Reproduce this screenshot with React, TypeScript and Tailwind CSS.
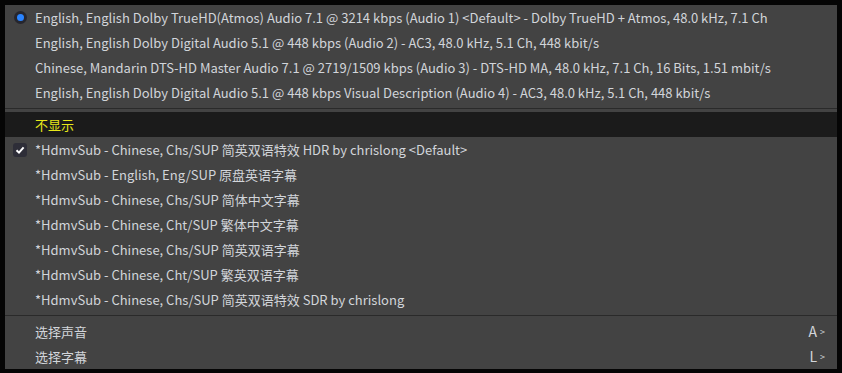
const audio = [
  'English, English Dolby TrueHD(Atmos) Audio 7.1 @ 3214 kbps (Audio 1) <Default> - Dolby TrueHD + Atmos, 48.0 kHz, 7.1 Ch',
  'English, English Dolby Digital Audio 5.1 @ 448 kbps (Audio 2) - AC3, 48.0 kHz, 5.1 Ch, 448 kbit/s',
  'Chinese, Mandarin DTS-HD Master Audio 7.1 @ 2719/1509 kbps (Audio 3) - DTS-HD MA, 48.0 kHz, 7.1 Ch, 16 Bits, 1.51 mbit/s',
  'English, English Dolby Digital Audio 5.1 @ 448 kbps Visual Description (Audio 4) - AC3, 48.0 kHz, 5.1 Ch, 448 kbit/s',
]

const subs = [
  '*HdmvSub - Chinese, Chs/SUP 简英双语特效 HDR by chrislong <Default>',
  '*HdmvSub - English, Eng/SUP 原盘英语字幕',
  '*HdmvSub - Chinese, Chs/SUP 简体中文字幕',
  '*HdmvSub - Chinese, Cht/SUP 繁体中文字幕',
  '*HdmvSub - Chinese, Chs/SUP 简英双语字幕',
  '*HdmvSub - Chinese, Cht/SUP 繁英双语字幕',
  '*HdmvSub - Chinese, Chs/SUP 简英双语特效 SDR by chrislong',
]

const Row = ({ children, mark, right }: { children: React.ReactNode; mark?: React.ReactNode; right?: string }) => (
  <div className="h-[25px] flex items-center">
    <div className="w-[30px] flex items-center justify-center">{mark}</div>
    <span className="flex-1 whitespace-nowrap">{children}</span>
    {right && (
      <span className="pr-[12px] flex items-center gap-[3px] text-[14px]">
        {right}
        <span className="text-[9px]">&gt;</span>
      </span>
    )}
  </div>
)

const Sep = () => (
  <div className="h-[7px] flex items-center">
    <div className="h-px w-full bg-[#2a2a2a]" />
  </div>
)

export default function App() {
  return (
    <div className="w-[842px] h-[373px] bg-[#050505] p-[5px] font-['Noto_Sans_CJK_SC','Microsoft_YaHei',sans-serif] text-[13px] text-[#d2d5da]">
      <div className="w-[832px] h-[364px] bg-[#434343]">
        {audio.map((a, i) => (
          <Row
            key={a}
            mark={
              i === 0 ? (
                <div className="w-[13px] h-[13px] rounded-full bg-[#26262e] flex items-center justify-center">
                  <div className="w-[7px] h-[7px] rounded-full bg-[#2a84ff]" />
                </div>
              ) : null
            }
          >
            {a}
          </Row>
        ))}
        <Sep />
        <div className="bg-[#1b1b1b] text-[#e8e81a]">
          <Row>不显示</Row>
        </div>
        {subs.map((s, i) => (
          <Row
            key={s}
            mark={
              i === 0 ? (
                <div className="w-[14px] h-[14px] rounded-[3px] bg-[#2e2e38] flex items-center justify-center">
                  <svg width="10" height="10" viewBox="0 0 10 10">
                    <path d="M1.5 5.2 L4 7.6 L8.6 2.4" fill="none" stroke="#fff" strokeWidth="2" />
                  </svg>
                </div>
              ) : null
            }
          >
            {s}
          </Row>
        ))}
        <Sep />
        <Row right="A">选择声音</Row>
        <Row right="L">选择字幕</Row>
      </div>
    </div>
  )
}
